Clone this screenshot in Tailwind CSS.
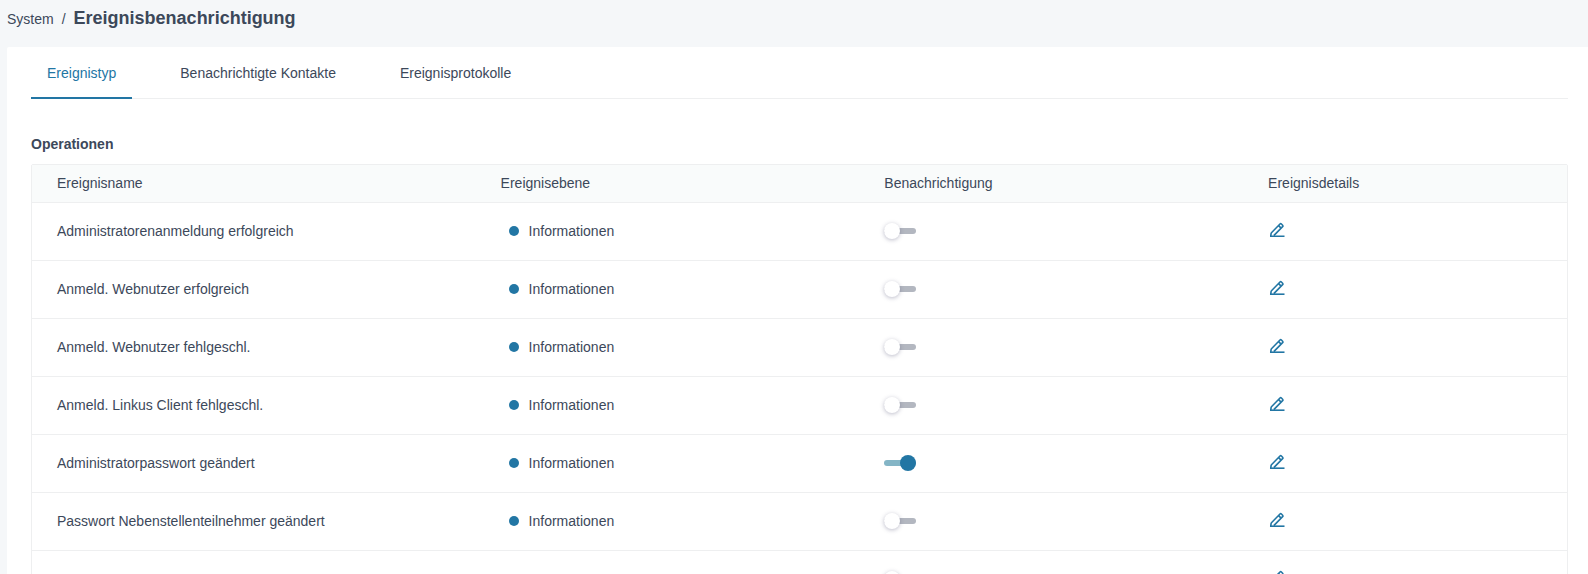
<!DOCTYPE html>
<html lang="de">
<head>
    <meta charset="UTF-8">
    <meta name="viewport" content="width=device-width, initial-scale=1">
    <title>Ereignisbenachrichtigung</title>
    <script src="https://cdn.jsdelivr.net/npm/@tailwindcss/browser@4"></script>
</head>
<body class="flex flex-col h-screen overflow-hidden bg-[#f5f7f9] font-['Liberation_Sans',Arial,sans-serif] text-sm text-[#3c485a]">
    <!-- Breadcrumb -->
    <header class="flex shrink-0 items-baseline gap-2 h-[47px] pl-[7px] pt-1">
        <a href="#system">System</a>
        <span>/</span>
        <h1 class="text-lg font-bold">Ereignisbenachrichtigung</h1>
    </header>

    <main class="flex-1 min-h-0 overflow-hidden ml-[7px] pl-6 pr-5 bg-white rounded-tl-xs">
        <!-- Tabs -->
        <nav class="flex gap-8 border-b border-[#eeeff0]">
            <a href="#types" class="-mb-px flex items-center h-[52px] px-4 pt-0.5 border-b-2 border-[#2276a4] text-[#2276a4]">Ereignistyp</a>
            <a href="#contacts" class="-mb-px flex items-center h-[52px] px-4 pt-0.5 border-b-2 border-transparent hover:text-[#2276a4]">Benachrichtigte Kontakte</a>
            <a href="#logs" class="-mb-px flex items-center h-[52px] px-4 pt-0.5 border-b-2 border-transparent hover:text-[#2276a4]">Ereignisprotokolle</a>
        </nav>

        <h2 class="mt-[35px] mb-[10px] font-bold">Operationen</h2>

        <!-- Event table -->
        <div class="border border-[#eeeff0] rounded-xs">
            <table class="w-full table-fixed text-left">
                <thead class="bg-[#f9fbfb]">
                    <tr class="h-[37px] border-b border-[#eeeff0]">
                        <th class="w-[28.9%] px-[25px] font-normal">Ereignisname</th>
                        <th class="w-[25%] px-[25px] font-normal">Ereignisebene</th>
                        <th class="w-[25%] px-[25px] font-normal">Benachrichtigung</th>
                        <th class="px-[25px] font-normal">Ereignisdetails</th>
                    </tr>
                </thead>
                <tbody id="eventRows"></tbody>
            </table>
        </div>
    </main>

    <script>
        const events = [
            { name: 'Administratorenanmeldung erfolgreich', level: 'Informationen', enabled: false },
            { name: 'Anmeld. Webnutzer erfolgreich', level: 'Informationen', enabled: false },
            { name: 'Anmeld. Webnutzer fehlgeschl.', level: 'Informationen', enabled: false },
            { name: 'Anmeld. Linkus Client fehlgeschl.', level: 'Informationen', enabled: false },
            { name: 'Administratorpasswort geändert', level: 'Informationen', enabled: true },
            { name: 'Passwort Nebenstellenteilnehmer geändert', level: 'Informationen', enabled: false },
            { name: '', level: '', enabled: false }
        ];

        const rows = document.getElementById('eventRows');
        events.forEach((event, i) => {
            const html = `
                <tr class="h-[58px] border-b border-[#eeeff0]">
                    <td class="px-[25px]"><label for="notify${i}">${event.name}</label></td>
                    <td class="px-[25px]">
                        <div class="flex items-center gap-2.5 pl-2">
                            <span class="size-2.5 rounded-full bg-[#2276a4]"></span>
                            ${event.level}
                        </div>
                    </td>
                    <td class="px-[25px]">
                        <input id="notify${i}" type="checkbox" role="switch" ${event.enabled ? 'checked' : ''}
                            class="flex items-center w-8 h-1.5 appearance-none rounded-full bg-[#b3b7c0] cursor-pointer before:size-4 before:rounded-full before:bg-white before:shadow-[0_1px_4px_rgba(60,60,100,0.35)] checked:justify-end checked:bg-[#84b5c6] checked:before:bg-[#2276a4] checked:before:shadow-none">
                    </td>
                    <td class="px-[25px]">
                        <button type="button" aria-label="Bearbeiten" class="flex pb-0.5 text-[#2276a4] cursor-pointer">
                            <svg class="size-[18px]" viewBox="0 0 18 18" fill="none" stroke="currentColor" stroke-width="1.6">
                                <path d="M3.2 12 12 3a1 1 0 0 1 1.4 0l1.2 1.2a1 1 0 0 1 0 1.4L5.8 14.6M10.6 4.6l2.5 2.5M3.2 11.8l-.5 3.6"/>
                                <path d="M2 15.2h14.5"/>
                            </svg>
                        </button>
                    </td>
                </tr>
            `;
            rows.insertAdjacentHTML('beforeend', html);
        });
    </script>
</body>
</html>
